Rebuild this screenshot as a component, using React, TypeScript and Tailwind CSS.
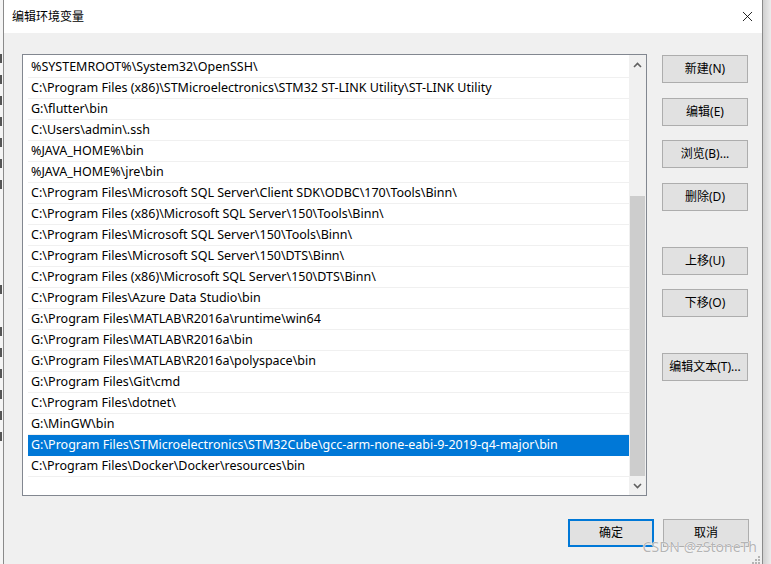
import { X } from "lucide-react";

const paths = [
  "%SYSTEMROOT%\\System32\\OpenSSH\\",
  "C:\\Program Files (x86)\\STMicroelectronics\\STM32 ST-LINK Utility\\ST-LINK Utility",
  "G:\\flutter\\bin",
  "C:\\Users\\admin\\.ssh",
  "%JAVA_HOME%\\bin",
  "%JAVA_HOME%\\jre\\bin",
  "C:\\Program Files\\Microsoft SQL Server\\Client SDK\\ODBC\\170\\Tools\\Binn\\",
  "C:\\Program Files (x86)\\Microsoft SQL Server\\150\\Tools\\Binn\\",
  "C:\\Program Files\\Microsoft SQL Server\\150\\Tools\\Binn\\",
  "C:\\Program Files\\Microsoft SQL Server\\150\\DTS\\Binn\\",
  "C:\\Program Files (x86)\\Microsoft SQL Server\\150\\DTS\\Binn\\",
  "C:\\Program Files\\Azure Data Studio\\bin",
  "G:\\Program Files\\MATLAB\\R2016a\\runtime\\win64",
  "G:\\Program Files\\MATLAB\\R2016a\\bin",
  "G:\\Program Files\\MATLAB\\R2016a\\polyspace\\bin",
  "G:\\Program Files\\Git\\cmd",
  "C:\\Program Files\\dotnet\\",
  "G:\\MinGW\\bin",
  "G:\\Program Files\\STMicroelectronics\\STM32Cube\\gcc-arm-none-eabi-9-2019-q4-major\\bin",
  "C:\\Program Files\\Docker\\Docker\\resources\\bin",
];

const selected = 18;

// buttons down the right side, with the gap above each one
const sideButtons = [
  { label: "新建(N)", mt: "mt-0" },
  { label: "编辑(E)", mt: "mt-[15px]" },
  { label: "浏览(B)...", mt: "mt-[14px]" },
  { label: "删除(D)", mt: "mt-[15px]" },
  { label: "上移(U)", mt: "mt-[36px]" },
  { label: "下移(O)", mt: "mt-[14px]" },
  { label: "编辑文本(T)...", mt: "mt-[36px]" },
];

// bits of the window behind that peek out on the left
const sliver = [0, 0, 1, 1, 1, 1, 1, 1, 1, 0, 0, 0, 0, 1, 0, 1, 1, 1, 1, 1, 1];

const font = "font-['Noto_Sans','Noto_Sans_CJK_SC',sans-serif]";

function Button({ label, primary }: { label: string; primary?: boolean }) {
  return (
    <div
      className={`w-[86px] h-[28px] flex items-center justify-center bg-[#e1e1e1] text-[12px] text-black ${
        primary ? "border-2 border-[#0078d7]" : "border border-[#adadad]"
      }`}
    >
      {label}
    </div>
  );
}

export default function App() {
  return (
    <div className={`w-[771px] h-[564px] overflow-hidden flex bg-[#e6e6e6] ${font}`}>
      <div className="w-[3px] shrink-0 bg-[#f5f5f5] flex flex-col pt-[6px]">
        {sliver.map((v, i) => (
          <div key={i} className="h-[21px] flex items-center">
            {v ? <div className="w-[2px] h-[9px] bg-[#555]" /> : null}
          </div>
        ))}
      </div>

      <div className="w-[760px] shrink-0 h-full border-l border-r border-[#8a8a8a] bg-[#f0f0f0] flex flex-col">
        {/* title bar */}
        <div className="h-[33px] bg-white flex items-center justify-between pl-[8px] pr-[6px] shrink-0">
          <span className="text-[12px] text-black">编辑环境变量</span>
          <X className="w-[17px] h-[17px] text-black" strokeWidth={1.2} />
        </div>

        <div className="flex pl-[18px] pt-[21px]">
          {/* path list */}
          <div className="w-[625px] h-[442px] border border-[#828790] bg-white flex shrink-0">
            <div className="flex-1 pt-[2px] pl-[5px] overflow-hidden">
              {paths.map((p, i) => (
                <div
                  key={i}
                  className={`h-[21px] leading-[20px] text-[12.5px] whitespace-nowrap pl-[3px] border-b ${
                    i === selected ? "bg-[#0078d7] text-white border-[#0078d7]" : "text-black border-[#f0f0f0]"
                  }`}
                >
                  {p}
                </div>
              ))}
            </div>
            {/* scrollbar */}
            <div className="w-[17px] bg-[#f0f0f0] flex flex-col items-center">
              <div className="h-[20px] flex items-center justify-center">
                <svg width="9" height="6" viewBox="0 0 9 6">
                  <path d="M1 5 L4.5 1.5 L8 5" fill="none" stroke="#606060" strokeWidth="1.6" />
                </svg>
              </div>
              <div className="flex-1 w-full flex flex-col">
                <div className="h-[122px]" />
                <div className="w-[15px] mx-auto h-[280px] bg-[#cdcdcd]" />
              </div>
              <div className="h-[20px] flex items-center justify-center">
                <svg width="9" height="6" viewBox="0 0 9 6">
                  <path d="M1 1 L4.5 4.5 L8 1" fill="none" stroke="#606060" strokeWidth="1.6" />
                </svg>
              </div>
            </div>
          </div>

          {/* side buttons */}
          <div className="ml-[15px] pt-[1px] flex flex-col">
            {sideButtons.map((b) => (
              <div key={b.label} className={b.mt}>
                <Button label={b.label} />
              </div>
            ))}
          </div>
        </div>

        {/* bottom buttons */}
        <div className="flex justify-end gap-[9px] pr-[13px] mt-[23px] relative">
          <Button label="确定" primary />
          <Button label="取消" />
          <span className="absolute right-[5px] top-[20px] text-[14px] leading-[16px] text-[#b4b4b4] [text-shadow:0_0_1px_#fff,0_0_1px_#fff]">
            CSDN @zStoneTh
          </span>
          <div className="absolute right-[2px] top-[37px] grid grid-cols-3 gap-[1px]">
            {[0, 0, 1, 0, 1, 1, 1, 1, 1].map((v, i) => (
              <div key={i} className={`w-[2px] h-[2px] ${v ? "bg-[#b4b4b4]" : ""}`} />
            ))}
          </div>
        </div>
      </div>

      {/* window shadow */}
      <div className="flex-1 bg-gradient-to-r from-[#d0d0d0] to-[#ececec]" />
    </div>
  );
}
